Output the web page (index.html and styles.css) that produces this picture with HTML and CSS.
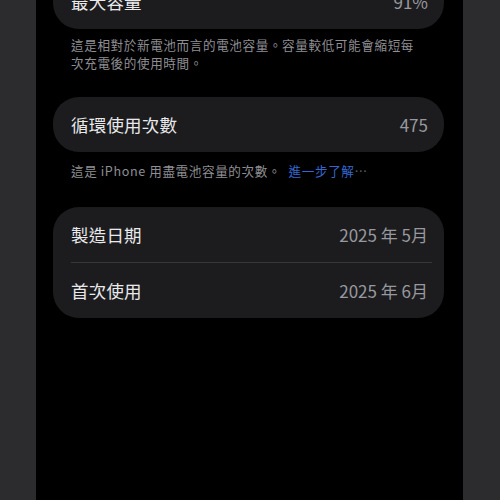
FILE: index.html
```html
<!DOCTYPE html>
<html lang="zh-Hant">
<head>
<meta charset="utf-8">
<link rel="stylesheet" href="styles.css">
</head>
<body>
<div class="screen">
  <div class="card card-top">
    <div class="row"><span class="label">最大容量</span><span class="value">91%</span></div>
  </div>
  <p class="caption caption-1">這是相對於新電池而言的電池容量。容量較低可能會縮短每次充電後的使用時間。</p>

  <div class="card card-2">
    <div class="row"><span class="label">循環使用次數</span><span class="value">475</span></div>
  </div>
  <p class="caption caption-2">這是 iPhone 用盡電池容量的次數。 <span class="link">進一步了解</span><span class="dots">⋯</span></p>

  <div class="card card-3">
    <div class="row"><span class="label">製造日期</span><span class="value">2025 年 5月</span></div>
    <div class="sep"></div>
    <div class="row"><span class="label">首次使用</span><span class="value">2025 年 6月</span></div>
  </div>
</div>
</body>
</html>
```

FILE: styles.css
```css
html, body {
  margin: 0;
  padding: 0;
  background: #2c2c2e;
  height: 500px;
  overflow: hidden;
}
body {
  font-family: "Noto Sans CJK TC", "Noto Sans", sans-serif;
}
.screen {
  margin-left: 36px;
  width: 427px;
  height: 500px;
  background: #000;
  padding-top: 1px;
  box-sizing: border-box;
  overflow: hidden;
}
.card {
  margin-left: 17px;
  width: 391px;
  background: #1c1c1e;
  border-radius: 26px;
}
.card-top {
  margin-top: -27px;
}
.row {
  height: 55px;
  display: flex;
  align-items: center;
  justify-content: space-between;
  padding: 0 16px 0 18px;
}
.label {
  color: #e9e9eb;
  font-size: 17.5px;
  letter-spacing: 0.2px;
}
.value {
  color: #98989e;
  font-size: 17px;
}
.sep {
  height: 1px;
  background: #38383a;
  margin: 0 12px 0 18px;
}
.caption {
  margin: 0;
  padding-left: 35px;
  width: 356px;
  color: #8e8e93;
  font-size: 12.6px;
  line-height: 18px;
  letter-spacing: 0.6px;
}
.caption-1 {
  margin-top: 7px;
  margin-bottom: 25px;
}
.caption-2 {
  margin-top: 10px;
  margin-bottom: 27px;
}
.link {
  color: #3468d0;
  margin-left: 4px;
}
.dots {
  color: #5a5a60;
}
```
